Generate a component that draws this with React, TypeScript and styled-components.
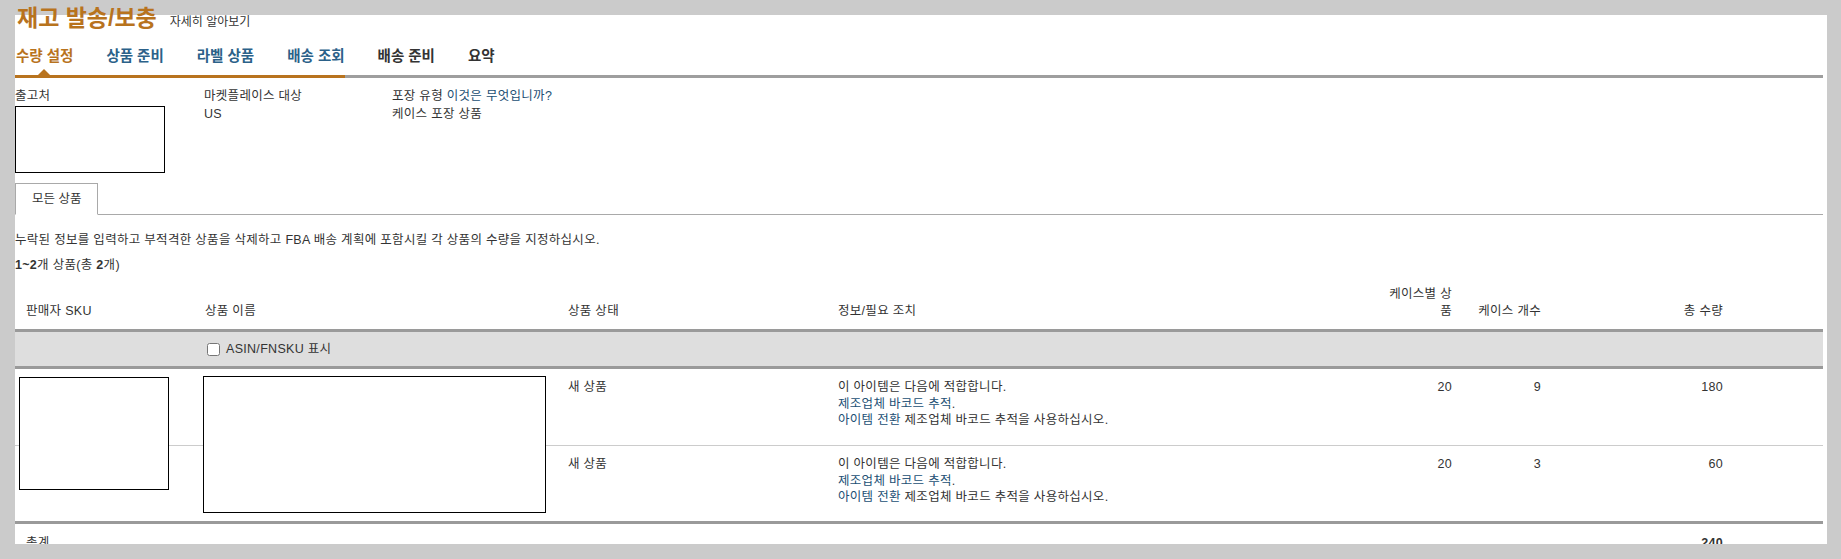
import React from "react";
import styled, { createGlobalStyle } from "styled-components";

const ORANGE = "#b8731e";
const BLUE = "#2b6189";
const LINK = "#224f74";
const TEXT = "#333333";

const GlobalStyle = createGlobalStyle`
  html, body { margin: 0; padding: 0; }
  body {
    background: #cbcbcb;
    font-family: "Liberation Sans", "Noto Sans CJK KR", Arial, sans-serif;
    font-size: 12.5px;
    letter-spacing: 0.3px;
    color: ${TEXT};
  }
  * { box-sizing: border-box; }
`;

const Page = styled.div`
  height: 559px;
  padding: 15px 14px 0 15px;
  overflow: hidden;
  background: #cbcbcb;
`;

const Panel = styled.main`
  display: flow-root;
  height: 529px;
  background: #ffffff;
  padding-right: 4px;
  clip-path: inset(-15px 0 0 0);
`;

const Header = styled.header`
  display: flex;
  align-items: baseline;
  gap: 13px;
  height: 30px;
  margin: -12px 0 0 2px;
  letter-spacing: 0;
`;

const Title = styled.h1`
  margin: 0;
  font-size: 23px;
  line-height: 30px;
  font-weight: 700;
  color: ${ORANGE};
`;

const LearnMore = styled.a`
  font-size: 12px;
  color: ${TEXT};
  text-decoration: none;
`;

const TabBar = styled.nav`
  display: flex;
  margin-top: 13px;
  border-bottom: 3px solid #9e9e9e;
  letter-spacing: 0;
`;

type Tone = "active" | "link" | "plain";

const Tab = styled.a<{ $tone: Tone; $filled: boolean; $first?: boolean }>`
  position: relative;
  padding: 0 0 9px ${(p) => (p.$first ? 1 : 33)}px;
  margin-bottom: -3px;
  border-bottom: 3px solid ${(p) => (p.$filled ? ORANGE : "transparent")};
  font-size: 14.5px;
  line-height: 20px;
  font-weight: 700;
  text-decoration: none;
  color: ${(p) => (p.$tone === "active" ? ORANGE : p.$tone === "link" ? BLUE : TEXT)};

  &::after {
    content: "";
    display: ${(p) => (p.$tone === "active" ? "block" : "none")};
    position: absolute;
    bottom: 0;
    left: 50%;
    transform: translateX(-50%);
    width: 0;
    height: 0;
    border-left: 6px solid transparent;
    border-right: 6px solid transparent;
    border-bottom: 6px solid ${ORANGE};
  }
`;

const InfoRow = styled.section`
  display: grid;
  grid-template-columns: 189px 188px 1fr;
  margin-top: 10px;
  line-height: 16px;
`;

const InfoBlock = styled.div`
  display: flex;
  flex-direction: column;
`;

const InfoValue = styled.div`
  margin-top: 2px;
`;

const Link = styled.a`
  color: ${LINK};
  text-decoration: none;
`;

const AddressBox = styled.div`
  margin-top: 2px;
  width: 150px;
  height: 67px;
  border: 1px solid #000;
  background: #fff;
`;

const SubTabs = styled.div`
  display: flex;
  margin-top: 10px;
  border-bottom: 1px solid #a9a9a9;
`;

const SubTab = styled.div`
  height: 32px;
  margin-bottom: -1px;
  padding: 0 16px;
  border: 1px solid #a9a9a9;
  border-bottom-color: #fff;
  background: #fff;
  line-height: 30px;
  letter-spacing: 0;
`;

const Description = styled.p`
  margin: 17px 0 0;
  line-height: 16px;
`;

const Count = styled.p`
  margin: 9px 0 0;
  line-height: 16px;
`;

const Table = styled.table`
  width: 100%;
  margin-top: 7px;
  border-collapse: separate;
  border-spacing: 0;
  table-layout: fixed;
`;

const HeadCell = styled.th<{ $align?: "left" | "right" }>`
  height: 52px;
  padding: 0 11px 9px;
  vertical-align: bottom;
  text-align: ${(p) => p.$align ?? "left"};
  font-weight: 400;
  line-height: 17px;
  border-bottom: 3px solid #9a9a9a;
`;

const FilterCell = styled.td`
  height: 37px;
  padding: 0 11px;
  background: #dedede;
  border-bottom: 3px solid #9a9a9a;
  vertical-align: middle;
`;

const CheckLabel = styled.label`
  display: inline-flex;
  align-items: center;
  line-height: 16px;
  padding-top: 2px;
`;

const Check = styled.input`
  width: 13px;
  height: 13px;
  margin: 0 6px 0 2px;
`;

const Cell = styled.td<{ $align?: "left" | "right"; $last?: boolean }>`
  position: relative;
  height: ${(p) => (p.$last ? 78 : 77)}px;
  padding: 10px 11px 0;
  vertical-align: top;
  text-align: ${(p) => p.$align ?? "left"};
  line-height: 16.5px;
  border-bottom: ${(p) => (p.$last ? "3px solid #9a9a9a" : "1px solid #cccccc")};
`;

const TotalCell = styled.td<{ $align?: "left" | "right"; $bold?: boolean }>`
  padding: 11px 11px 0;
  vertical-align: top;
  line-height: 16px;
  text-align: ${(p) => p.$align ?? "left"};
  font-weight: ${(p) => (p.$bold ? 700 : 400)};
`;

const Redaction = styled.div<{ $left: number; $top: number; $w: number; $h: number }>`
  position: absolute;
  left: ${(p) => p.$left}px;
  top: ${(p) => p.$top}px;
  width: ${(p) => p.$w}px;
  height: ${(p) => p.$h}px;
  border: 1px solid #000;
  background: #fff;
  z-index: 1;
`;

const tabs: { label: string; tone: Tone; filled: boolean }[] = [
  { label: "수량 설정", tone: "active", filled: true },
  { label: "상품 준비", tone: "link", filled: true },
  { label: "라벨 상품", tone: "link", filled: true },
  { label: "배송 조회", tone: "link", filled: true },
  { label: "배송 준비", tone: "plain", filled: false },
  { label: "요약", tone: "plain", filled: false },
];

const rows = [
  { status: "새 상품", perCase: 20, cases: 9, total: 180 },
  { status: "새 상품", perCase: 20, cases: 3, total: 60 },
];

const colWidths = [179, 363, 270, 546, 90, 89, 182, 89];

export default function App() {
  const total = rows.reduce((s, r) => s + r.total, 0);
  return (
    <>
      <GlobalStyle />
      <Page>
        <Panel>
          <Header>
            <Title>재고 발송/보충</Title>
            <LearnMore>자세히 알아보기</LearnMore>
          </Header>

          <TabBar>
            {tabs.map((t, i) => (
              <Tab key={t.label} $tone={t.tone} $filled={t.filled} $first={i === 0}>
                {t.label}
              </Tab>
            ))}
          </TabBar>

          <InfoRow>
            <InfoBlock>
              <div>출고처</div>
              <AddressBox />
            </InfoBlock>
            <InfoBlock>
              <div>마켓플레이스 대상</div>
              <InfoValue>US</InfoValue>
            </InfoBlock>
            <InfoBlock>
              <div>
                포장 유형 <Link>이것은 무엇입니까?</Link>
              </div>
              <InfoValue>케이스 포장 상품</InfoValue>
            </InfoBlock>
          </InfoRow>

          <SubTabs>
            <SubTab>모든 상품</SubTab>
          </SubTabs>

          <Description>
            누락된 정보를 입력하고 부적격한 상품을 삭제하고 FBA 배송 계획에 포함시킬 각 상품의 수량을 지정하십시오.
          </Description>
          <Count>
            <b>1~2</b>개 상품(총 <b>2</b>개)
          </Count>

          <Table>
            <colgroup>
              {colWidths.map((w, i) => (
                <col key={i} style={{ width: w }} />
              ))}
            </colgroup>
            <thead>
              <tr>
                <HeadCell>판매자 SKU</HeadCell>
                <HeadCell>상품 이름</HeadCell>
                <HeadCell>상품 상태</HeadCell>
                <HeadCell>정보/필요 조치</HeadCell>
                <HeadCell $align="right">케이스별 상품</HeadCell>
                <HeadCell $align="right">케이스 개수</HeadCell>
                <HeadCell $align="right">총 수량</HeadCell>
                <HeadCell />
              </tr>
            </thead>
            <tbody>
              <tr>
                <FilterCell />
                <FilterCell>
                  <CheckLabel>
                    <Check type="checkbox" />
                    ASIN/FNSKU 표시
                  </CheckLabel>
                </FilterCell>
                <FilterCell />
                <FilterCell />
                <FilterCell />
                <FilterCell />
                <FilterCell />
                <FilterCell />
              </tr>
              {rows.map((r, i) => {
                const last = i === rows.length - 1;
                return (
                  <tr key={i}>
                    <Cell $last={last}>
                      {i === 0 && <Redaction $left={4} $top={8} $w={150} $h={113} />}
                    </Cell>
                    <Cell $last={last}>
                      {i === 0 && <Redaction $left={9} $top={7} $w={343} $h={137} />}
                    </Cell>
                    <Cell $last={last}>{r.status}</Cell>
                    <Cell $last={last}>
                      이 아이템은 다음에 적합합니다.
                      <br />
                      <Link>제조업체 바코드 추적</Link>.
                      <br />
                      <Link>아이템 전환</Link> 제조업체 바코드 추적을 사용하십시오.
                    </Cell>
                    <Cell $last={last} $align="right">{r.perCase}</Cell>
                    <Cell $last={last} $align="right">{r.cases}</Cell>
                    <Cell $last={last} $align="right">{r.total}</Cell>
                    <Cell $last={last} />
                  </tr>
                );
              })}
              <tr>
                <TotalCell>총계</TotalCell>
                <TotalCell />
                <TotalCell />
                <TotalCell />
                <TotalCell />
                <TotalCell />
                <TotalCell $align="right" $bold>
                  {total}
                </TotalCell>
                <TotalCell />
              </tr>
            </tbody>
          </Table>
        </Panel>
      </Page>
    </>
  );
}
